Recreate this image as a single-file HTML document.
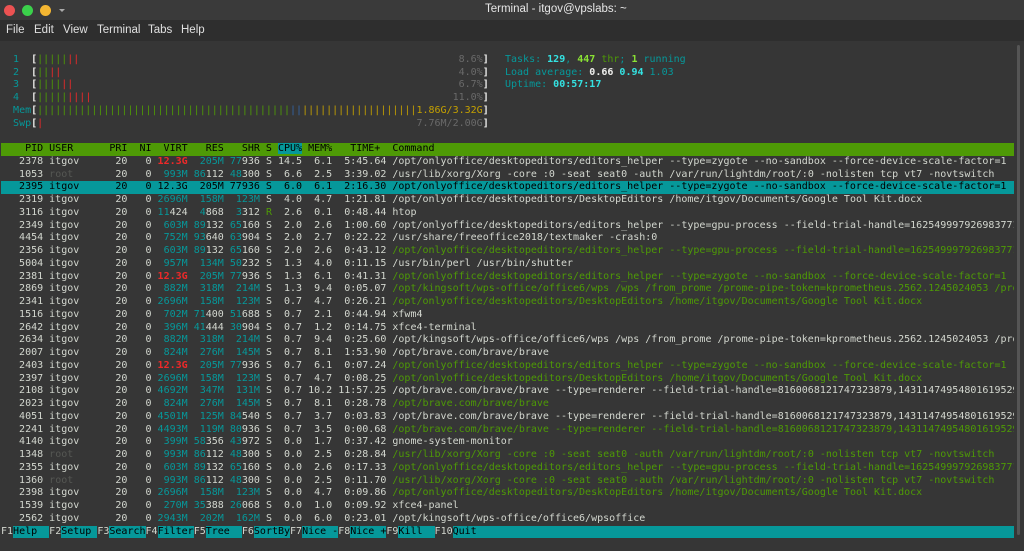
<!DOCTYPE html>
<html><head><meta charset="utf-8"><style>
*{margin:0;padding:0;box-sizing:border-box}
html,body{width:1024px;height:551px;overflow:hidden;background:#363636}
body{position:relative;font-family:"Liberation Sans","DejaVu Sans",sans-serif}
#title{position:absolute;left:0;top:0;width:1024px;height:20px;background:#3a3a3a}
.dot{position:absolute;top:5px;width:11px;height:11px;border-radius:50%}
#title .t{position:absolute;left:485px;top:3px;font-size:11.5px;color:#e6e6e6}
#menu{position:absolute;left:0;top:20px;width:1024px;height:21px;background:#2e2e2e;color:#e0e0e0;font-size:11.5px}
#menu span{position:absolute;top:4px}
#term{position:absolute;left:1px;top:53.75px;font-family:"DejaVu Sans Mono","Liberation Mono",monospace;font-size:10px;line-height:12.75px;color:#d3d7cf}
.l{height:12.75px;width:1013px;white-space:pre;overflow:hidden}
.c{color:#06989a}.r{color:#ef2929;font-weight:bold}.g{color:#4e9a06}.d{color:#555753}.b{color:#3465a4}.y{color:#c4a000}.gr{color:#6a6a6a}
.W{color:#eeeeec;font-weight:bold}.C{color:#34e2e2;font-weight:bold}.G{color:#8ae234;font-weight:bold}
.hd{background:#4e9a06;color:#000}.hd i{font-style:normal;background:#06989a}
.sel{background:#06989a;color:#000}
.k{background:#06989a;color:#000}
#right{position:absolute;left:505px;top:53.75px;font-family:"DejaVu Sans Mono","Liberation Mono",monospace;font-size:10px;line-height:12.75px;color:#06989a}
#right div{white-space:pre;height:12.75px}
#sb{position:absolute;left:1017px;top:45px;width:3px;height:490px;background:#555;border-radius:2px}
</style></head><body>
<div id="title">
<div class="dot" style="left:4px;background:#ec5252"></div>
<div class="dot" style="left:22px;background:#3bd14b"></div>
<div class="dot" style="left:40px;background:#f5b732"></div>
<div style="position:absolute;left:59px;top:9px;width:0;height:0;border-left:3.5px solid transparent;border-right:3.5px solid transparent;border-top:3.5px solid #aaa"></div>
<div class="t">Terminal - itgov@vpslabs: ~</div>
</div>
<div id="menu"><span style="left:6px">File</span><span style="left:34px">Edit</span><span style="left:63px">View</span><span style="left:97px">Terminal</span><span style="left:148px">Tabs</span><span style="left:181px">Help</span></div>
<div id="sb"></div>
<div id="right"><div>Tasks: <span class="C">129</span>, <span class="G">447</span> <span class="g">thr</span>; <span class="G">1</span> running</div><div>Load average: <span class="W">0.66</span> <span class="C">0.94</span> 1.03</div><div>Uptime: <span class="C">00:57:17</span></div></div>
<div id="term">
<div class="l">  <span class="c">1</span>  <span class="W">[</span><span class="g">|||||</span><span class="r" style="font-weight:normal">||</span>                                                               <span class="gr">8.6%</span><span class="W">]</span></div>
<div class="l">  <span class="c">2</span>  <span class="W">[</span><span class="g">||</span><span class="r" style="font-weight:normal">||</span>                                                                  <span class="gr">4.0%</span><span class="W">]</span></div>
<div class="l">  <span class="c">3</span>  <span class="W">[</span><span class="g">||||</span><span class="r" style="font-weight:normal">||</span>                                                                <span class="gr">6.7%</span><span class="W">]</span></div>
<div class="l">  <span class="c">4</span>  <span class="W">[</span><span class="g">|||||</span><span class="r" style="font-weight:normal">||||</span>                                                            <span class="gr">11.0%</span><span class="W">]</span></div>
<div class="l">  <span class="c">Mem</span><span class="W">[</span><span class="g">||||||||||||||||||||||||||||||||||||||||||</span><span class="b">||</span><span class="y">|||||||||||||||||||1.86G/3.32G</span><span class="W">]</span></div>
<div class="l">  <span class="c">Swp</span><span class="W">[</span><span class="r" style="font-weight:normal">|</span>                                                              <span class="gr">7.76M/2.00G</span><span class="W">]</span></div>
<div class="l"> </div>
<div class="l hd">    PID USER      PRI  NI  VIRT   RES   SHR S <i>CPU%</i> MEM%   TIME+  Command</div>
<div class="l">   2378 itgov      20   0 <span class="r">12.3G</span>  <span class="c">205M</span> <span class="c">77</span>936 S 14.5  6.1  5:45.64 /opt/onlyoffice/desktopeditors/editors_helper --type=zygote --no-sandbox --force-device-scale-factor=1 -</div>
<div class="l">   1053 <span class="d">root</span>       20   0  <span class="c">993M</span> <span class="c">86</span>112 <span class="c">48</span>300 S  6.6  2.5  3:39.02 /usr/lib/xorg/Xorg -core :0 -seat seat0 -auth /var/run/lightdm/root/:0 -nolisten tcp vt7 -novtswitch</div>
<div class="l sel">   2395 itgov      20   0 12.3G  205M 77936 S  6.0  6.1  2:16.30 /opt/onlyoffice/desktopeditors/editors_helper --type=zygote --no-sandbox --force-device-scale-factor=1 -</div>
<div class="l">   2319 itgov      20   0 <span class="c">2696M</span>  <span class="c">158M</span>  <span class="c">123M</span> S  4.0  4.7  1:21.81 /opt/onlyoffice/desktopeditors/DesktopEditors /home/itgov/Documents/Google Tool Kit.docx</div>
<div class="l">   3116 itgov      20   0 <span class="c">11</span>424  <span class="c">4</span>868  <span class="c">3</span>312 <span class="g">R</span>  2.6  0.1  0:48.44 htop</div>
<div class="l">   2349 itgov      20   0  <span class="c">603M</span> <span class="c">89</span>132 <span class="c">65</span>160 S  2.0  2.6  1:00.60 /opt/onlyoffice/desktopeditors/editors_helper --type=gpu-process --field-trial-handle=162549997926983771</div>
<div class="l">   4454 itgov      20   0  <span class="c">752M</span> <span class="c">93</span>640 <span class="c">63</span>904 S  2.0  2.7  0:22.22 /usr/share/freeoffice2018/textmaker -crash:0</div>
<div class="l">   2356 itgov      20   0  <span class="c">603M</span> <span class="c">89</span>132 <span class="c">65</span>160 S  2.0  2.6  0:43.12 <span class="g">/opt/onlyoffice/desktopeditors/editors_helper --type=gpu-process --field-trial-handle=162549997926983771</span></div>
<div class="l">   5004 itgov      20   0  <span class="c">957M</span>  <span class="c">134M</span> <span class="c">50</span>232 S  1.3  4.0  0:11.15 /usr/bin/perl /usr/bin/shutter</div>
<div class="l">   2381 itgov      20   0 <span class="r">12.3G</span>  <span class="c">205M</span> <span class="c">77</span>936 S  1.3  6.1  0:41.31 <span class="g">/opt/onlyoffice/desktopeditors/editors_helper --type=zygote --no-sandbox --force-device-scale-factor=1 -</span></div>
<div class="l">   2869 itgov      20   0  <span class="c">882M</span>  <span class="c">318M</span>  <span class="c">214M</span> S  1.3  9.4  0:05.07 <span class="g">/opt/kingsoft/wps-office/office6/wps /wps /from_prome /prome-pipe-token=kprometheus.2562.1245024053 /pro</span></div>
<div class="l">   2341 itgov      20   0 <span class="c">2696M</span>  <span class="c">158M</span>  <span class="c">123M</span> S  0.7  4.7  0:26.21 <span class="g">/opt/onlyoffice/desktopeditors/DesktopEditors /home/itgov/Documents/Google Tool Kit.docx</span></div>
<div class="l">   1516 itgov      20   0  <span class="c">702M</span> <span class="c">71</span>400 <span class="c">51</span>688 S  0.7  2.1  0:44.94 xfwm4</div>
<div class="l">   2642 itgov      20   0  <span class="c">396M</span> <span class="c">41</span>444 <span class="c">30</span>904 S  0.7  1.2  0:14.75 xfce4-terminal</div>
<div class="l">   2634 itgov      20   0  <span class="c">882M</span>  <span class="c">318M</span>  <span class="c">214M</span> S  0.7  9.4  0:25.60 /opt/kingsoft/wps-office/office6/wps /wps /from_prome /prome-pipe-token=kprometheus.2562.1245024053 /pro</div>
<div class="l">   2007 itgov      20   0  <span class="c">824M</span>  <span class="c">276M</span>  <span class="c">145M</span> S  0.7  8.1  1:53.90 /opt/brave.com/brave/brave</div>
<div class="l">   2403 itgov      20   0 <span class="r">12.3G</span>  <span class="c">205M</span> <span class="c">77</span>936 S  0.7  6.1  0:07.24 <span class="g">/opt/onlyoffice/desktopeditors/editors_helper --type=zygote --no-sandbox --force-device-scale-factor=1 -</span></div>
<div class="l">   2397 itgov      20   0 <span class="c">2696M</span>  <span class="c">158M</span>  <span class="c">123M</span> S  0.7  4.7  0:08.25 <span class="g">/opt/onlyoffice/desktopeditors/DesktopEditors /home/itgov/Documents/Google Tool Kit.docx</span></div>
<div class="l">   2108 itgov      20   0 <span class="c">4692M</span>  <span class="c">347M</span>  <span class="c">131M</span> S  0.7 10.2 11:57.25 /opt/brave.com/brave/brave --type=renderer --field-trial-handle=8160068121747323879,14311474954801619529</div>
<div class="l">   2023 itgov      20   0  <span class="c">824M</span>  <span class="c">276M</span>  <span class="c">145M</span> S  0.7  8.1  0:28.78 <span class="g">/opt/brave.com/brave/brave</span></div>
<div class="l">   4051 itgov      20   0 <span class="c">4501M</span>  <span class="c">125M</span> <span class="c">84</span>540 S  0.7  3.7  0:03.83 /opt/brave.com/brave/brave --type=renderer --field-trial-handle=8160068121747323879,14311474954801619529</div>
<div class="l">   2241 itgov      20   0 <span class="c">4493M</span>  <span class="c">119M</span> <span class="c">80</span>936 S  0.7  3.5  0:00.68 <span class="g">/opt/brave.com/brave/brave --type=renderer --field-trial-handle=8160068121747323879,14311474954801619529</span></div>
<div class="l">   4140 itgov      20   0  <span class="c">399M</span> <span class="c">58</span>356 <span class="c">43</span>972 S  0.0  1.7  0:37.42 gnome-system-monitor</div>
<div class="l">   1348 <span class="d">root</span>       20   0  <span class="c">993M</span> <span class="c">86</span>112 <span class="c">48</span>300 S  0.0  2.5  0:28.84 <span class="g">/usr/lib/xorg/Xorg -core :0 -seat seat0 -auth /var/run/lightdm/root/:0 -nolisten tcp vt7 -novtswitch</span></div>
<div class="l">   2355 itgov      20   0  <span class="c">603M</span> <span class="c">89</span>132 <span class="c">65</span>160 S  0.0  2.6  0:17.33 <span class="g">/opt/onlyoffice/desktopeditors/editors_helper --type=gpu-process --field-trial-handle=162549997926983771</span></div>
<div class="l">   1360 <span class="d">root</span>       20   0  <span class="c">993M</span> <span class="c">86</span>112 <span class="c">48</span>300 S  0.0  2.5  0:11.70 <span class="g">/usr/lib/xorg/Xorg -core :0 -seat seat0 -auth /var/run/lightdm/root/:0 -nolisten tcp vt7 -novtswitch</span></div>
<div class="l">   2398 itgov      20   0 <span class="c">2696M</span>  <span class="c">158M</span>  <span class="c">123M</span> S  0.0  4.7  0:09.86 <span class="g">/opt/onlyoffice/desktopeditors/DesktopEditors /home/itgov/Documents/Google Tool Kit.docx</span></div>
<div class="l">   1539 itgov      20   0  <span class="c">270M</span> <span class="c">35</span>388 <span class="c">26</span>068 S  0.0  1.0  0:09.92 xfce4-panel</div>
<div class="l">   2562 itgov      20   0 <span class="c">2943M</span>  <span class="c">202M</span>  <span class="c">162M</span> S  0.0  6.0  0:23.01 /opt/kingsoft/wps-office/office6/wpsoffice</div>
<div class="l" style="display:flex">F1<span class="k">Help  </span>F2<span class="k">Setup </span>F3<span class="k">Search</span>F4<span class="k">Filter</span>F5<span class="k">Tree  </span>F6<span class="k">SortBy</span>F7<span class="k">Nice -</span>F8<span class="k">Nice +</span>F9<span class="k">Kill  </span>F10<span class="k" style="flex:1">Quit</span></div>
</div>
</body></html>
